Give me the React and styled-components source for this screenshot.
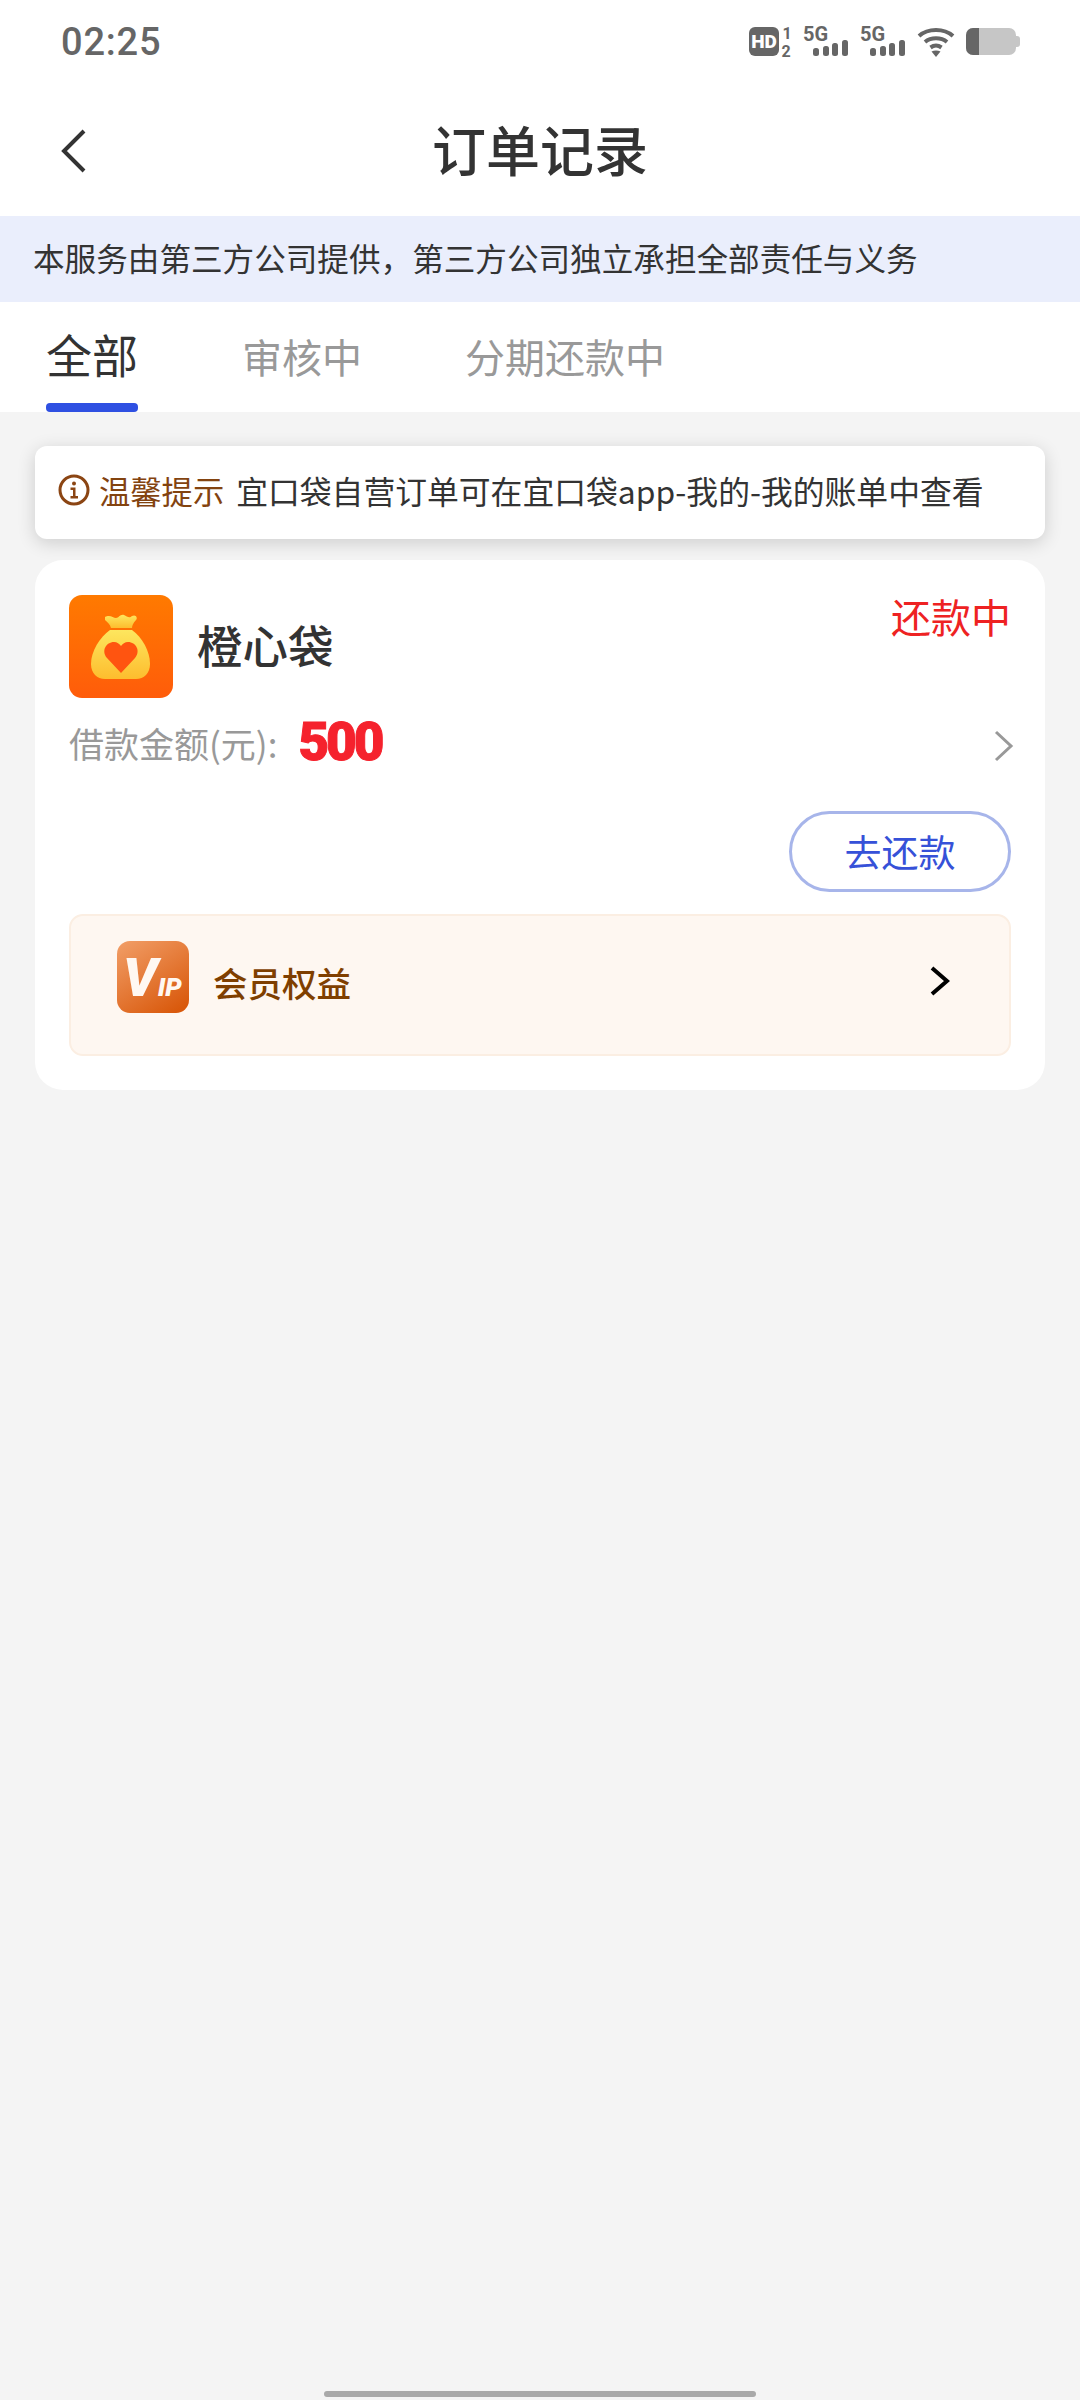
import styled, { createGlobalStyle } from "styled-components";

const GlobalStyle = createGlobalStyle`
  html, body {
    margin: 0;
    padding: 0;
    background: #f4f4f4;
  }
  * {
    box-sizing: border-box;
  }
`;

const cjk = `"Noto Sans CJK SC", "Noto Sans", sans-serif`;

const Page = styled.div`
  display: flex;
  flex-direction: column;
  width: 1080px;
  height: 2400px;
  background: #f4f4f4;
  font-family: ${cjk};
  overflow: hidden;
`;

const StatusBar = styled.div`
  display: flex;
  justify-content: space-between;
  align-items: center;
  height: 84px;
  padding: 0 60px 0 61px;
  background: #fff;
`;

const Time = styled.span`
  font-family: Roboto, sans-serif;
  font-size: 38px;
  font-weight: 500;
  letter-spacing: 0.8px;
  color: #666;
`;

const StatusIcons = styled.div`
  display: flex;
  align-items: center;
  gap: 11px;
  margin-top: -1px;

  & svg {
    overflow: visible;
  }
`;

const NavBar = styled.div`
  display: flex;
  align-items: center;
  justify-content: center;
  position: relative;
  height: 132px;
  padding-bottom: 2px;
  background: #fff;
`;

const BackButton = styled.div`
  position: absolute;
  left: 60px;
  top: 45px;
  display: flex;
`;

const Title = styled.h1`
  margin: 0;
  font-size: 54px;
  font-weight: 500;
  line-height: 1;
  color: #333;
`;

const ServiceNote = styled.div`
  display: flex;
  align-items: center;
  height: 86px;
  padding: 0 0 5px 33px;
  background: #eaeefc;
  font-size: 31.6px;
  color: #333;
`;

const Tabs = styled.div`
  display: flex;
  align-items: flex-start;
  height: 110px;
  padding-left: 46px;
  background: #fff;
`;

const Tab = styled.div`
  display: flex;
  flex-direction: column;
  align-items: center;
  position: relative;
  height: 110px;
  margin-right: ${(p) => p.$gap}px;
  padding-top: ${(p) => (p.$active ? 20 : 26)}px;
  font-size: ${(p) => (p.$active ? 46 : 40)}px;
  line-height: ${(p) => (p.$active ? 62 : 56)}px;
  color: ${(p) => (p.$active ? "#333" : "#999")};
`;

const TabLine = styled.span`
  position: absolute;
  left: 0;
  right: 0;
  bottom: 0;
  height: 9px;
  border-radius: 4px;
  background: #2f50e2;
`;

const Content = styled.div`
  display: flex;
  flex-direction: column;
  gap: 21px;
  padding: 34px 35px 0;
`;

const TipCard = styled.div`
  display: flex;
  align-items: center;
  height: 93px;
  padding: 0 0 5px 23px;
  background: #fff;
  border-radius: 12px;
  box-shadow: 0 4px 18px rgba(0, 0, 0, 0.16);
`;

const TipLabel = styled.span`
  margin: 0 12px 0 9px;
  font-size: 31.3px;
  color: #83430f;
`;

const TipText = styled.span`
  font-size: 31.8px;
  color: #333;
`;

const OrderCard = styled.div`
  display: flex;
  flex-direction: column;
  height: 530px;
  padding: 35px 34px 0 34px;
  background: #fff;
  border-radius: 28px;
`;

const CardHead = styled.div`
  display: flex;
  justify-content: space-between;
  align-items: flex-start;
`;

const Brand = styled.div`
  display: flex;
  align-items: center;
  gap: 24px;
`;

const BrandName = styled.span`
  padding-bottom: 6px;
  font-size: 45.5px;
  font-weight: 500;
  color: #333;
`;

const Status = styled.span`
  margin-top: -2px;
  font-size: 40px;
  line-height: 46px;
  color: #ee2222;
`;

const AmountRow = styled.div`
  display: flex;
  align-items: center;
  height: 62px;
  margin-top: 16px;
`;

const AmountLabel = styled.span`
  padding-bottom: 6px;
  font-size: 35px;
  color: #999;
`;

const AmountValue = styled.span`
  margin-left: 21px;
  font-family: Roboto, sans-serif;
  font-size: 53px;
  font-weight: 900;
  letter-spacing: -3px;
  line-height: 1;
  color: #f5222d;
  -webkit-text-stroke: 1px #f5222d;
  transform: translateY(-3px);
`;

const RowArrow = styled.div`
  display: flex;
  margin: 2px -3px 0 auto;
`;

const ActionRow = styled.div`
  display: flex;
  justify-content: flex-end;
  margin-top: 35px;
`;

const RepayButton = styled.button`
  width: 222px;
  height: 81px;
  padding: 0 0 2px;
  background: #fff;
  border: 3px solid #a7b5ea;
  border-radius: 41px;
  font-family: ${cjk};
  font-size: 37px;
  color: #3651d8;
`;

const VipBox = styled.div`
  display: flex;
  align-items: center;
  height: 142px;
  margin-top: 22px;
  padding: 0 58px 0 46px;
  background: #fef7f1;
  border: 2px solid #fbeee2;
  border-radius: 14px;
`;

const VipBadge = styled.div`
  display: flex;
  margin-top: -17px;
`;

const VipLabel = styled.span`
  margin-left: 24px;
  padding-bottom: 6px;
  font-size: 34.5px;
  font-weight: 500;
  color: #7f3f00;
`;

const VipArrow = styled.div`
  display: flex;
  margin: -9px 1px 0 auto;
`;

const HomeBar = styled.div`
  width: 432px;
  height: 6px;
  margin: auto auto 3px;
  border-radius: 3px;
  background: #a9a9a9;
`;

const HdIcon = () => (
  <svg width="43" height="30" viewBox="0 0 43 30">
    <rect x="0" y="0" width="30" height="29" rx="6" fill="#666" />
    <text x="15" y="21" textAnchor="middle" fontFamily="Roboto" fontWeight="900" fontSize="19" fill="#fff">HD</text>
    <text x="38" y="12" textAnchor="middle" fontFamily="Roboto" fontWeight="700" fontSize="16" fill="#666">1</text>
    <text x="37" y="30" textAnchor="middle" fontFamily="Roboto" fontWeight="700" fontSize="16" fill="#666">2</text>
  </svg>
);

const SignalIcon = () => (
  <svg width="46" height="31" viewBox="0 0 46 31">
    <text x="0" y="15" fontFamily="Roboto" fontWeight="700" fontSize="20" fill="#666">5G</text>
    <rect x="10" y="22" width="6" height="8" rx="2.5" fill="#666" />
    <rect x="20" y="20" width="6" height="10" rx="2.5" fill="#666" />
    <rect x="29" y="17" width="6" height="13" rx="2.5" fill="#666" />
    <rect x="39" y="14" width="6" height="16" rx="2.5" fill="#666" />
  </svg>
);

const WifiIcon = () => (
  <svg width="38" height="30" viewBox="0 0 38 30" fill="none" stroke="#666" strokeWidth="4">
    <path d="M2 9 C11 1 27 1 36 9" />
    <path d="M8 15 C14 10 24 10 30 15" />
    <path d="M13.5 20.5 C17 18 21 18 24.5 20.5" />
    <path d="M19 30 L14.5 24.5 C17 23 21 23 23.5 24.5 Z" fill="#666" stroke="none" />
  </svg>
);

const BatteryIcon = () => (
  <svg width="54" height="27" viewBox="0 0 54 27">
    <path d="M49 8 h2 a3 3 0 0 1 3 3 v5 a3 3 0 0 1 -3 3 h-2 Z" fill="#c6c6c6" />
    <rect x="0" y="0" width="50" height="27" rx="7" fill="#c6c6c6" />
    <path d="M7 0 H13 V27 H7 A7 7 0 0 1 0 20 V7 A7 7 0 0 1 7 0 Z" fill="#666" />
  </svg>
);

const BackIcon = () => (
  <svg width="28" height="44" viewBox="0 0 28 44" fill="none" stroke="#333" strokeWidth="4">
    <path d="M24 2 L4 22 L24 42" />
  </svg>
);

const InfoIcon = () => (
  <svg width="32" height="32" viewBox="0 0 32 32">
    <circle cx="16" cy="16" r="14" fill="none" stroke="#8b4513" strokeWidth="3" />
    <circle cx="16" cy="9.5" r="2" fill="#8b4513" />
    <path d="M12.5 13.5 H17.5 V22 H20 V24.5 H12.5 V22 H15 V16 H12.5 Z" fill="#8b4513" />
  </svg>
);

const ChevronIcon = ({ color, width, height, stroke }) => (
  <svg width={width} height={height} viewBox={`0 0 ${width} ${height}`} fill="none" stroke={color} strokeWidth={stroke}>
    <path d={`M2 2 L${width - 3} ${height / 2} L2 ${height - 2}`} />
  </svg>
);

const BagLogo = () => (
  <svg width="104" height="103" viewBox="0 0 104 103">
    <defs>
      <linearGradient id="bagBg" x1="0" y1="0" x2="0" y2="1">
        <stop offset="0" stopColor="#ff7a00" />
        <stop offset="1" stopColor="#ff5c0a" />
      </linearGradient>
      <linearGradient id="bagBody" x1="0" y1="0" x2="0" y2="1">
        <stop offset="0" stopColor="#fde65e" />
        <stop offset="1" stopColor="#fdbd2e" />
      </linearGradient>
    </defs>
    <rect width="104" height="103" rx="13" fill="url(#bagBg)" />
    <path d="M36 22 C41 19 44 23 47 23 C50 23 51 19 55 20 C58 21 60 24 63 21 C67 19 69 23 67 25 C64 28 63 31 63 33 H42 C41 29 38 27 36 25 Z" fill="url(#bagBody)" />
    <path d="M41 35 H63 C73 42 81 56 81 69 C81 78 75 84 67 84 H36 C28 84 22 78 22 69 C22 56 31 42 41 35 Z" fill="url(#bagBody)" />
    <path d="M52 78 L38 63 C32 56 37 47 45 47 C48 47 50.5 49 52 51 C53.5 49 56 47 59 47 C67 47 72 56 66 63 Z" fill="#ff5410" />
  </svg>
);

const VipLogo = () => (
  <svg width="72" height="72" viewBox="0 0 72 72">
    <defs>
      <linearGradient id="vipBg" x1="0.15" y1="0" x2="0.8" y2="1">
        <stop offset="0" stopColor="#f09a62" />
        <stop offset="1" stopColor="#d9590c" />
      </linearGradient>
    </defs>
    <rect width="72" height="72" rx="13" fill="url(#vipBg)" />
    <text x="6" y="55" fontFamily="Roboto" fontWeight="900" fontStyle="italic" fill="#fff8f2">
      <tspan fontSize="54">V</tspan>
      <tspan fontSize="26">IP</tspan>
    </text>
  </svg>
);

export default function App() {
  return (
    <Page>
      <GlobalStyle />
      <StatusBar>
        <Time>02:25</Time>
        <StatusIcons>
          <HdIcon />
          <SignalIcon />
          <SignalIcon />
          <WifiIcon />
          <BatteryIcon />
        </StatusIcons>
      </StatusBar>
      <NavBar>
        <BackButton>
          <BackIcon />
        </BackButton>
        <Title>订单记录</Title>
      </NavBar>
      <ServiceNote>本服务由第三方公司提供，第三方公司独立承担全部责任与义务</ServiceNote>
      <Tabs>
        <Tab $active $gap={104}>
          全部
          <TabLine />
        </Tab>
        <Tab $gap={103}>审核中</Tab>
        <Tab>分期还款中</Tab>
      </Tabs>
      <Content>
        <TipCard>
          <InfoIcon />
          <TipLabel>温馨提示</TipLabel>
          <TipText>宜口袋自营订单可在宜口袋app-我的-我的账单中查看</TipText>
        </TipCard>
        <OrderCard>
          <CardHead>
            <Brand>
              <BagLogo />
              <BrandName>橙心袋</BrandName>
            </Brand>
            <Status>还款中</Status>
          </CardHead>
          <AmountRow>
            <AmountLabel>借款金额(元):</AmountLabel>
            <AmountValue>500</AmountValue>
            <RowArrow>
              <ChevronIcon color="#999" width={20} height={32} stroke={3} />
            </RowArrow>
          </AmountRow>
          <ActionRow>
            <RepayButton>去还款</RepayButton>
          </ActionRow>
          <VipBox>
            <VipBadge>
              <VipLogo />
            </VipBadge>
            <VipLabel>会员权益</VipLabel>
            <VipArrow>
              <ChevronIcon color="#000" width={20} height={30} stroke={4} />
            </VipArrow>
          </VipBox>
        </OrderCard>
      </Content>
      <HomeBar />
    </Page>
  );
}
